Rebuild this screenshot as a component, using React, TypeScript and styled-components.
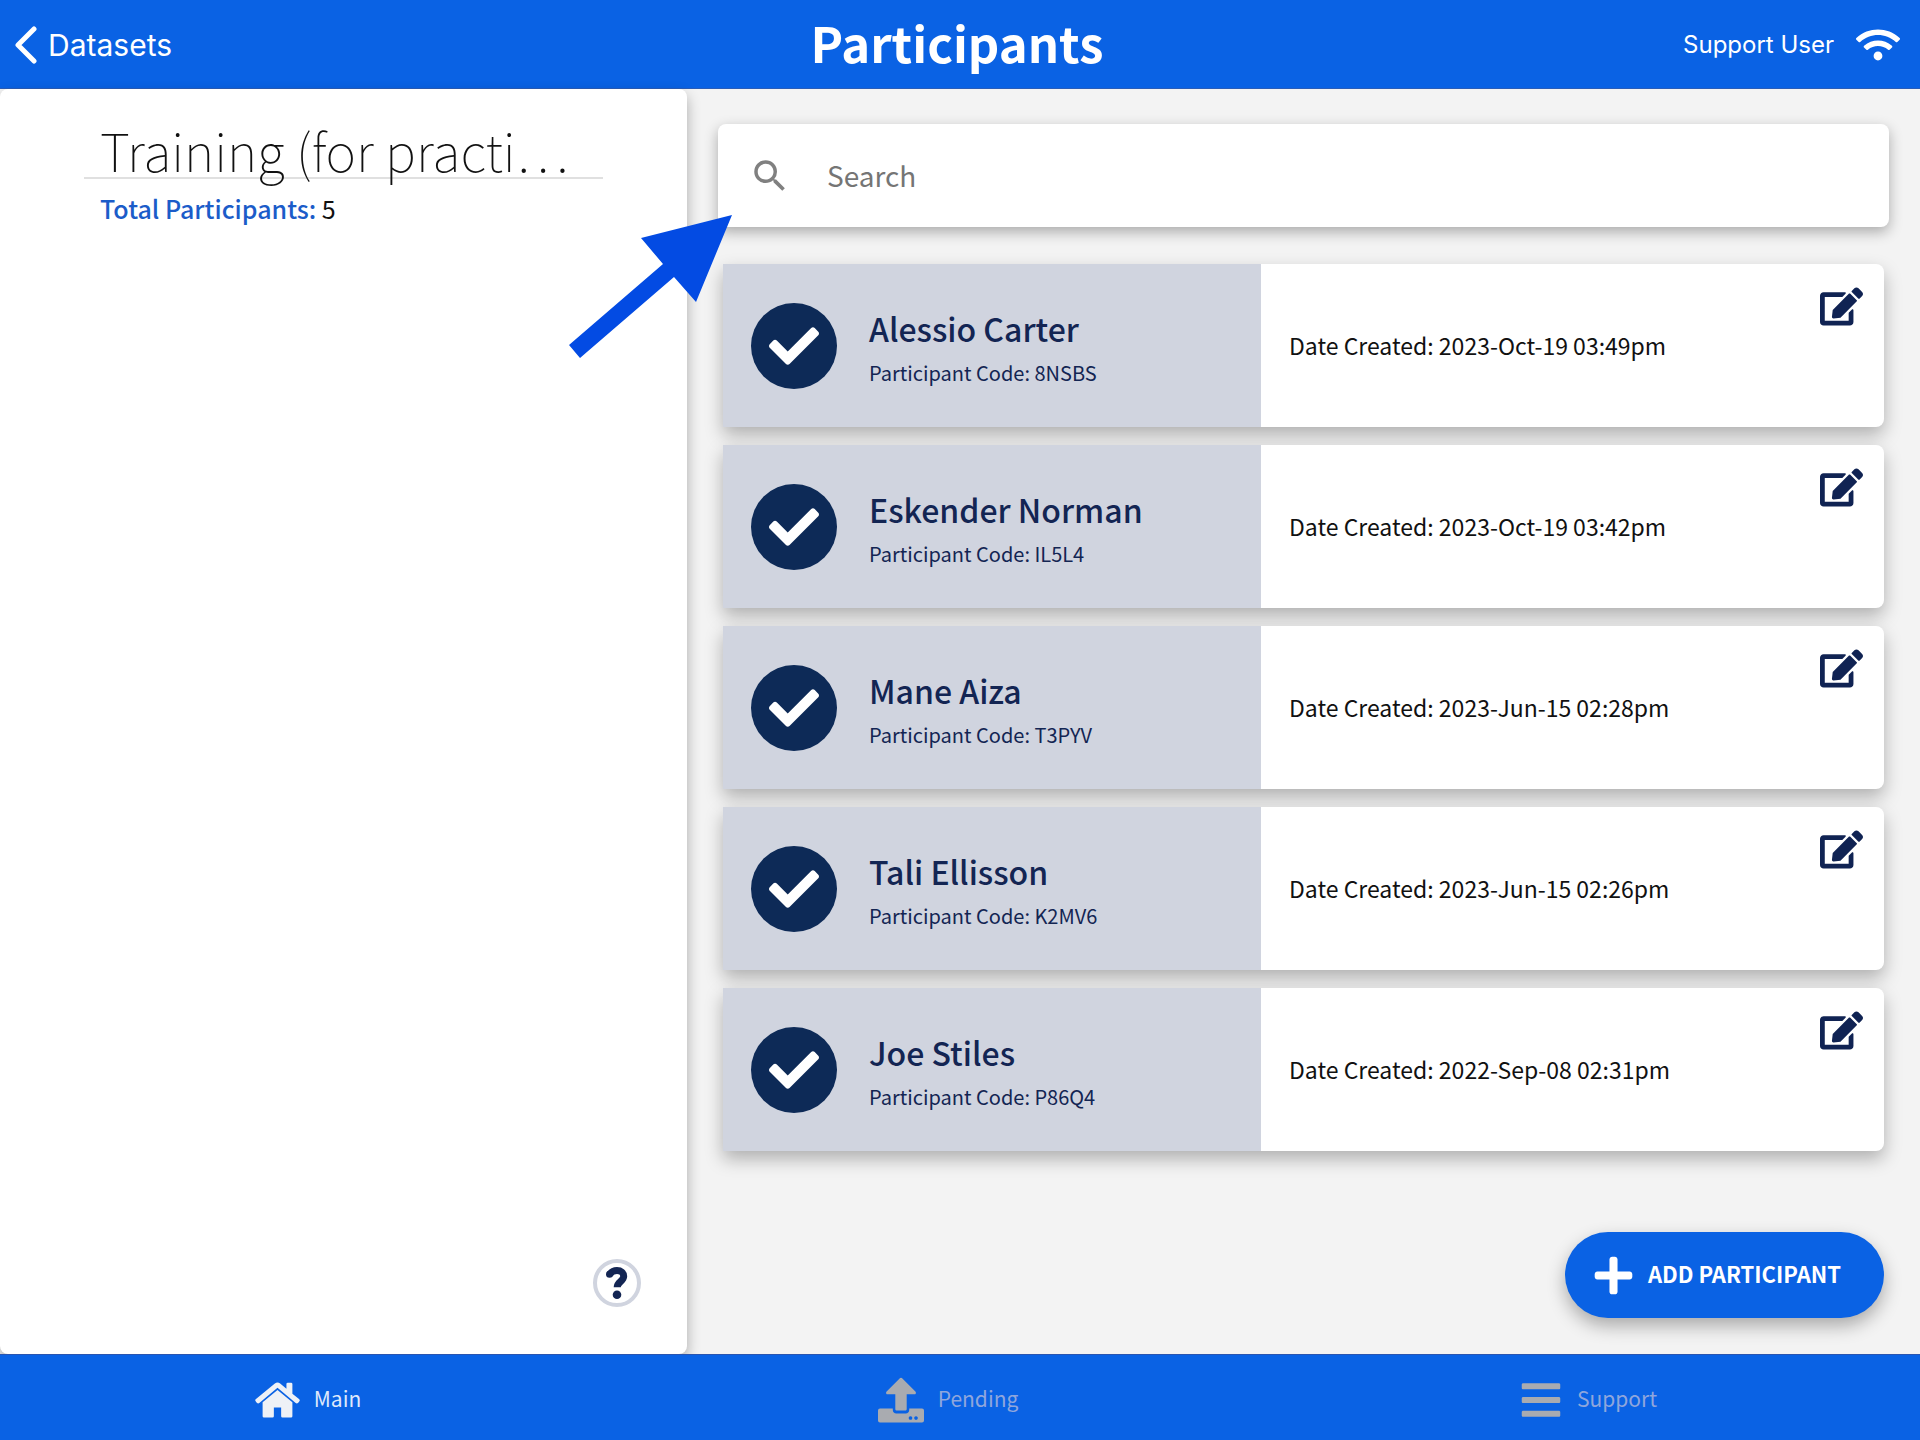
import React, { useState } from 'react';
import styled, { createGlobalStyle } from 'styled-components';
import { FaCheck, FaEdit, FaPlus, FaBars, FaWifi } from 'react-icons/fa';
import { MdSearch } from 'react-icons/md';

const blue = '#0a62e4';
const navy = '#132553';
const sans = "'Noto Sans CJK JP', 'Noto Sans', sans-serif";
const system = "Inter, 'Liberation Sans', sans-serif";

const GlobalStyle = createGlobalStyle`
  *, *::before, *::after { box-sizing: border-box; }
  body { margin: 0; font-family: ${sans}; background: #f3f3f3; color: #111; }
  button, input { font: inherit; color: inherit; }
  button { cursor: pointer; }
`;

const Screen = styled.div`
  position: relative;
  min-height: 100vh;
  display: grid;
  grid-template-rows: 89px 1fr 86px;
`;

const Header = styled.header`
  display: grid;
  grid-template-columns: 1fr auto 1fr;
  align-items: center;
  padding: 2px 20px 0 14px;
  background: ${blue};
  color: #fff;
  border-bottom: 1px solid #2a5db8;
`;

const BackButton = styled.button`
  justify-self: start;
  display: flex;
  align-items: center;
  gap: 10px;
  padding: 0;
  border: 0;
  background: none;
  font-family: ${system};
  font-size: 30px;
  line-height: 36px;
`;

const Title = styled.h1`
  margin: 0;
  padding-bottom: 6px;
  font-size: 49px;
  line-height: 72px;
  font-weight: 700;
`;

const User = styled.div`
  justify-self: end;
  display: flex;
  align-items: center;
  gap: 22px;
  font-family: ${system};
  font-size: 24px;
  line-height: 36px;
`;

const Body = styled.div`
  display: grid;
  grid-template-columns: 687fr 1233fr;
`;

const Panel = styled.aside`
  display: flex;
  flex-direction: column;
  justify-content: space-between;
  padding: 34px 84px 47px;
  background: #fff;
  border-radius: 8px;
  box-shadow: 0 6px 14px rgba(0, 0, 0, 0.3);
`;

const DatasetName = styled.h2`
  margin: 0;
  padding: 0 16px;
  height: 56px;
  border-bottom: 2px solid #e0e0e0;
  font-size: 52px;
  line-height: 54px;
  font-weight: 100;
  white-space: nowrap;
`;

const Total = styled.p`
  margin: 0;
  padding: 11px 16px;
  font-size: 25px;
  line-height: 36px;
  strong { font-weight: 500; color: #1b5cc9; }
`;

const HelpButton = styled.button`
  align-self: flex-end;
  margin-right: -38px;
  display: grid;
  place-items: center;
  width: 48px;
  height: 48px;
  padding: 0;
  border: 4px solid #d0d4df;
  border-radius: 50%;
  background: #fff;
  color: ${navy};
`;

const Main = styled.main`
  display: flex;
  flex-direction: column;
  padding: 35px 31px 36px;
`;

const SearchBox = styled.label`
  display: flex;
  align-items: center;
  gap: 36px;
  height: 103px;
  padding: 0 31px;
  border-radius: 8px;
  background: #fff;
  color: #808080;
  box-shadow: 0 5px 14px rgba(0, 0, 0, 0.3);
`;

const SearchInput = styled.input`
  flex: 1;
  min-width: 0;
  padding: 0 0 2px;
  border: 0;
  outline: 0;
  background: none;
  font-size: 28px;
  line-height: 40px;
  &::placeholder { color: #757575; opacity: 1; }
`;

const List = styled.ul`
  display: flex;
  flex-direction: column;
  gap: 18px;
  margin: 37px 5px 0;
  padding: 0;
  list-style: none;
`;

const Card = styled.li`
  display: grid;
  grid-template-columns: 538fr 623fr;
  min-height: 163px;
  background: #fff;
  border-radius: 0 8px 8px 0;
  box-shadow: 0 8px 18px rgba(0, 0, 0, 0.28);
`;

const Person = styled.div`
  display: flex;
  align-items: center;
  gap: 32px;
  padding-left: 28px;
  background: #d0d4df;
  color: ${navy};
`;

const PersonText = styled.div`
  padding-top: 6px;
`;

const Badge = styled.span`
  flex: none;
  display: grid;
  place-items: center;
  width: 86px;
  height: 86px;
  border-radius: 50%;
  background: #0d2a57;
  color: #fff;
`;

const Name = styled.h3`
  margin: 0;
  font-size: 32px;
  line-height: 48px;
  font-weight: 500;
`;

const Code = styled.p`
  margin: 0;
  font-size: 20px;
  line-height: 42px;
`;

const Details = styled.div`
  display: flex;
  align-items: center;
  justify-content: space-between;
  padding: 0 21px 0 28px;
  font-size: 23px;
  span { padding-bottom: 2px; }
`;

const EditButton = styled.button`
  align-self: flex-start;
  margin-top: 21px;
  padding: 0;
  border: 0;
  background: none;
  color: #102353;
  svg { display: block; }
`;

const AddButton = styled.button`
  align-self: flex-end;
  display: flex;
  align-items: center;
  gap: 13px;
  height: 86px;
  margin: auto 5px 0 0;
  padding: 0 43px 0 27px;
  border: 0;
  border-radius: 43px;
  background: ${blue};
  color: #fff;
  font-size: 22px;
  font-weight: 700;
  box-shadow: 0 8px 18px rgba(0, 0, 0, 0.3);
  span { padding-bottom: 4px; }
`;

const TabBar = styled.nav`
  display: grid;
  grid-template-columns: repeat(3, 1fr);
  background: ${blue};
  border-top: 1px solid #2a55b0;
`;

const Tab = styled.button<{ $active: boolean }>`
  display: flex;
  align-items: center;
  justify-content: center;
  gap: 14px;
  padding: 4px 24px 0 0;
  border: 0;
  background: none;
  font-size: 21px;
  color: ${p => (p.$active ? '#dfe8fb' : '#8fa6dc')};
  svg { color: ${p => (p.$active ? '#eef1f6' : '#a9abb0')}; }
  span { padding-bottom: 4px; }
`;

const Pointer = styled.svg`
  position: absolute;
  left: 568px;
  top: 214px;
  pointer-events: none;
`;

const UploadIcon = () => (
  <svg width="46" height="46" viewBox="0 0 46 46" fill="currentColor" aria-hidden="true">
    <path d="M21.600 1.400c.8-.9 2-.9 2.800 0l13 13c1.200 1.300.4 2.900-1.200 2.900H28.700v14.700c0 1-.6 1.600-1.600 1.600h-8.200c-1 0-1.600-.6-1.600-1.600V17.300H9.800c-1.600 0-2.400-1.600-1.200-2.900z" />
    <path fillRule="evenodd" d="M2 31.500h12.800v1.600c0 2 1.500 3.500 3.500 3.500h9.400c2 0 3.500-1.500 3.500-3.500v-1.600H44a2 2 0 0 1 2 2V43.500a2 2 0 0 1-2 2H2a2 2 0 0 1-2-2V33.500a2 2 0 0 1 2-2zM32.500 39.200a1.800 1.800 0 1 0 .01 0zM38 39.200a1.800 1.800 0 1 0 .01 0z" />
  </svg>
);

const HomeIcon = () => (
  <svg width="45" height="36" viewBox="0 0 136 108" fill="currentColor" aria-hidden="true">
    <path d="M60 4q8-6 16 0L95 20V6q0-4 4-4h10q4 0 4 4v29l20 16q4 4 1 7l-4 5q-4 3-7 0L68 17L13 63q-3 3-7 0l-4-5q-3-4 1-7z" />
    <path d="M68 24L113 61v42q0 4-4 4H83q-4 0-4-4V77H57v26q0 4-4 4H27q-4 0-4-4V61z" />
  </svg>
);

const QuestionIcon = () => (
  <svg width="24" height="34" viewBox="0 0 24 34" fill="none" aria-hidden="true">
    <path d="M4.500 8.500C6.500 5.800 9 4.600 12 4.600c4 0 6.700 2.300 6.700 5.700 0 5.200-6.500 5.200-6.500 11" stroke="currentColor" strokeWidth="7" strokeLinejoin="round" />
    <circle cx="4.500" cy="8.300" r="3.500" fill="currentColor" />
    <circle cx="12" cy="28.800" r="4.300" fill="currentColor" />
  </svg>
);

const participants = [
  { name: 'Alessio Carter', code: '8NSBS', created: '2023-Oct-19 03:49pm' },
  { name: 'Eskender Norman', code: 'IL5L4', created: '2023-Oct-19 03:42pm' },
  { name: 'Mane Aiza', code: 'T3PYV', created: '2023-Jun-15 02:28pm' },
  { name: 'Tali Ellisson', code: 'K2MV6', created: '2023-Jun-15 02:26pm' },
  { name: 'Joe Stiles', code: 'P86Q4', created: '2022-Sep-08 02:31pm' },
];

const tabs = [
  { label: 'Main', icon: <HomeIcon /> },
  { label: 'Pending', icon: <UploadIcon /> },
  { label: 'Support', icon: <FaBars size={44} /> },
];

export default function App() {
  const [tab, setTab] = useState('Main');
  const [query, setQuery] = useState('');
  const shown = participants.filter(p => p.name.toLowerCase().includes(query.toLowerCase()));

  return (
    <>
      <GlobalStyle />
      <Screen>
        <Header>
          <BackButton type="button">
            <svg width="24" height="38" viewBox="0 0 24 38" fill="none" stroke="currentColor" strokeWidth="5" strokeLinecap="round" strokeLinejoin="round" aria-hidden="true">
              <path d="M20 3L4 19L20 35" />
            </svg>
            Datasets
          </BackButton>
          <Title>Participants</Title>
          <User>
            Support User
            <FaWifi size={44} />
          </User>
        </Header>
        <Body>
          <Panel>
            <div>
              <DatasetName>Training (for practi…</DatasetName>
              <Total><strong>Total Participants:</strong> {participants.length}</Total>
            </div>
            <HelpButton type="button" aria-label="Help"><QuestionIcon /></HelpButton>
          </Panel>
          <Main>
            <SearchBox>
              <MdSearch size={42} />
              <SearchInput type="text" aria-label="Search" placeholder="Search" value={query} onChange={e => setQuery(e.target.value)} />
            </SearchBox>
            <List>
              {shown.map(p => (
                <Card key={p.code}>
                  <Person>
                    <Badge><FaCheck size={50} /></Badge>
                    <PersonText>
                      <Name>{p.name}</Name>
                      <Code>Participant Code: {p.code}</Code>
                    </PersonText>
                  </Person>
                  <Details>
                    <span>Date Created: {p.created}</span>
                    <EditButton type="button" aria-label={`Edit ${p.name}`}><FaEdit size={43} /></EditButton>
                  </Details>
                </Card>
              ))}
            </List>
            <AddButton type="button"><FaPlus size={43} /><span>ADD PARTICIPANT</span></AddButton>
          </Main>
        </Body>
        <TabBar>
          {tabs.map(t => (
            <Tab key={t.label} type="button" $active={tab === t.label} onClick={() => setTab(t.label)}>
              {t.icon}
              <span>{t.label}</span>
            </Tab>
          ))}
        </TabBar>
        <Pointer width="166" height="146" viewBox="0 0 166 146" fill="#034be3" aria-hidden="true">
          <path d="M164 1L128 88L106 63L12 144L1 131L95 50L73 24Z" />
        </Pointer>
      </Screen>
    </>
  );
}
